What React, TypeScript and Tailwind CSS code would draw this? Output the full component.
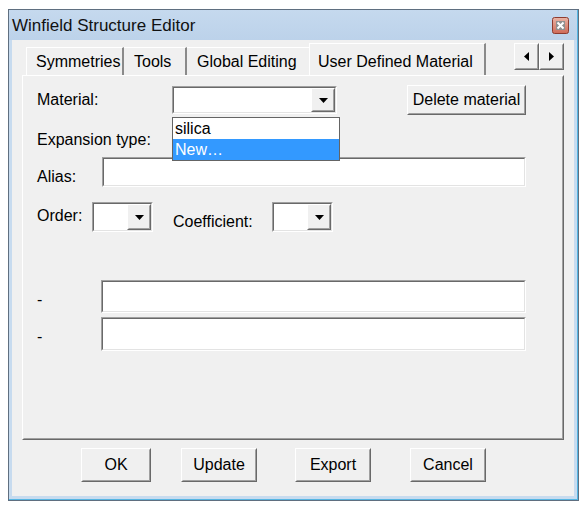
import type { ReactNode } from 'react';

// classic 3D edges
function Raised({ children, className = '' }: { children?: ReactNode; className?: string }) {
  return (
    <div className={`border border-t-white border-l-white border-r-[#696969] border-b-[#696969] ${className}`}>
      <div className="flex h-full w-full items-center justify-center border border-t-[#f0f0f0] border-l-[#f0f0f0] border-r-[#a0a0a0] border-b-[#a0a0a0] bg-[#f0f0f0]">
        {children}
      </div>
    </div>
  );
}

function Sunken({ children, className = '' }: { children?: ReactNode; className?: string }) {
  return (
    <div className={`border border-t-[#a0a0a0] border-l-[#a0a0a0] border-r-white border-b-white ${className}`}>
      <div className="flex h-full w-full border border-t-[#696969] border-l-[#696969] border-r-[#e3e3e3] border-b-[#e3e3e3] bg-white">
        {children}
      </div>
    </div>
  );
}

function Arrow({ dir }: { dir: 'down' | 'left' | 'right' }) {
  const pts = dir === 'down' ? '0,0 9,0 4.5,5' : dir === 'left' ? '5,0 5,9 0,4.5' : '0,0 0,9 5,4.5';
  const w = dir === 'down' ? 9 : 5;
  const h = dir === 'down' ? 5 : 9;
  return (
    <svg width={w} height={h} viewBox={`0 0 ${w} ${h}`}>
      <polygon points={pts} fill="#000" />
    </svg>
  );
}

function Combo({ className = '' }: { className?: string }) {
  return (
    <Sunken className={className}>
      <div className="flex-1" />
      <Raised className="h-full w-[24px]">
        <Arrow dir="down" />
      </Raised>
    </Sunken>
  );
}

function CloseBox() {
  return (
    <svg width="17" height="17" viewBox="0 0 17 17">
      <defs>
        <linearGradient id="cb" x1="0" y1="0" x2="0" y2="1">
          <stop offset="0" stopColor="#e9b4a6" />
          <stop offset="1" stopColor="#cf6a57" />
        </linearGradient>
      </defs>
      <rect x="0.5" y="0.5" width="16" height="16" rx="2" fill="url(#cb)" stroke="#8e3c30" />
      <rect x="4" y="4" width="9" height="9" fill="#8f8f8f" />
      <path d="M5.5 5.5 L11.5 11.5 M11.5 5.5 L5.5 11.5" stroke="#fff" strokeWidth="2" />
    </svg>
  );
}

export default function App() {
  return (
    <div className="h-[507px] w-[587px] bg-white pl-[8px] pt-[9px] font-['Liberation_Sans',Arial,sans-serif] text-[16px] text-black">
      {/* Window */}
      <div className="flex h-[492px] w-[571px] flex-col border border-[#5f6f80] bg-[#c7dbef]">
        <div className="flex flex-1 flex-col border-r border-b border-r-[#55b5e2] border-b-[#55b5e2]">
          {/* Title bar */}
          <div className="flex h-[30px] items-center justify-between bg-gradient-to-b from-[#c5d9ee] to-[#bcd2ea] pl-[3px] pr-[8px]">
            <span className="text-[17px] leading-none text-[#111]">Winfield Structure Editor</span>
            <CloseBox />
          </div>

          {/* Client area */}
          <div className="mx-[3px] mb-[3px] flex flex-1 flex-col bg-[#f0f0f0]">
            {/* Tab strip */}
            <div className="mt-[3px] flex h-[32px] items-end pl-[14px] pr-[10px]">
              <div className="flex h-[28px] w-[98px] items-center border-t border-l border-t-white border-l-white border-r-2 border-r-[#8a8a8a] pl-[9px]">
                Symmetries
              </div>
              <div className="flex h-[28px] w-[63px] items-center border-t border-t-white border-r-2 border-r-[#8a8a8a] pl-[10px]">
                Tools
              </div>
              <div className="flex h-[28px] w-[122px] items-center border-t border-t-white pl-[10px]">
                Global Editing
              </div>
              <div className="flex h-[32px] w-[177px] items-start border-t border-l border-t-white border-l-white border-r-2 border-r-[#8a8a8a] pl-[8px] pt-[6px]">
                User Defined Material
              </div>
              <div className="ml-auto flex self-start">
                <Raised className="h-[27px] w-[25px]">
                  <Arrow dir="left" />
                </Raised>
                <Raised className="h-[27px] w-[25px]">
                  <Arrow dir="right" />
                </Raised>
              </div>
            </div>

            {/* Tab panel */}
            <div className="relative ml-[10px] h-[365px] w-[542px] border border-t-white border-l-white border-r-[#696969] border-b-[#696969]">
              <div className="h-full w-full border border-t-[#f0f0f0] border-l-[#f0f0f0] border-r-[#a0a0a0] border-b-[#a0a0a0] pl-[13px] pt-[8px]">
                <div className="flex h-[30px] items-center">
                  <span className="w-[135px]">Material:</span>
                  <Combo className="h-[28px] w-[165px]" />
                  <Raised className="ml-[70px] h-[30px] w-[119px]">Delete material</Raised>
                </div>

                <div className="mt-[15px] flex h-[20px] items-center">Expansion type:</div>

                <div className="mt-[7px] flex h-[30px]">
                  <span className="w-[65px] pt-[8px]">Alias:</span>
                  <Sunken className="h-[30px] w-[424px]" />
                </div>

                <div className="mt-[15px] flex h-[30px]">
                  <span className="w-[55px] pt-[2px]">Order:</span>
                  <Combo className="h-[30px] w-[61px]" />
                  <span className="ml-[20px] w-[99px] pt-[8px]">Coefficient:</span>
                  <Combo className="h-[30px] w-[61px]" />
                </div>

                <div className="mt-[48px] flex h-[33px] items-center">
                  <span className="w-[64px] pt-[6px]">-</span>
                  <Sunken className="h-[33px] w-[425px]" />
                </div>
                <div className="mt-[4px] flex h-[34px] items-center">
                  <span className="w-[64px] pt-[6px]">-</span>
                  <Sunken className="h-[34px] w-[425px]" />
                </div>
              </div>

              {/* Open dropdown list */}
              <div className="absolute left-[149px] top-[41px] w-[168px] border border-[#646464] bg-white">
                <div className="flex h-[21px] items-center pl-[2px]">silica</div>
                <div className="flex h-[21px] items-center bg-[#3399ff] pl-[2px] text-white">New…</div>
              </div>
            </div>

            {/* Buttons */}
            <div className="mt-[8px] flex h-[34px] pl-[69px]">
              <Raised className="h-[34px] w-[70px]">OK</Raised>
              <Raised className="ml-[30px] h-[34px] w-[76px]">Update</Raised>
              <Raised className="ml-[38px] h-[34px] w-[76px]">Export</Raised>
              <Raised className="ml-[39px] h-[34px] w-[76px]">Cancel</Raised>
            </div>
          </div>
        </div>
      </div>
    </div>
  );
}
